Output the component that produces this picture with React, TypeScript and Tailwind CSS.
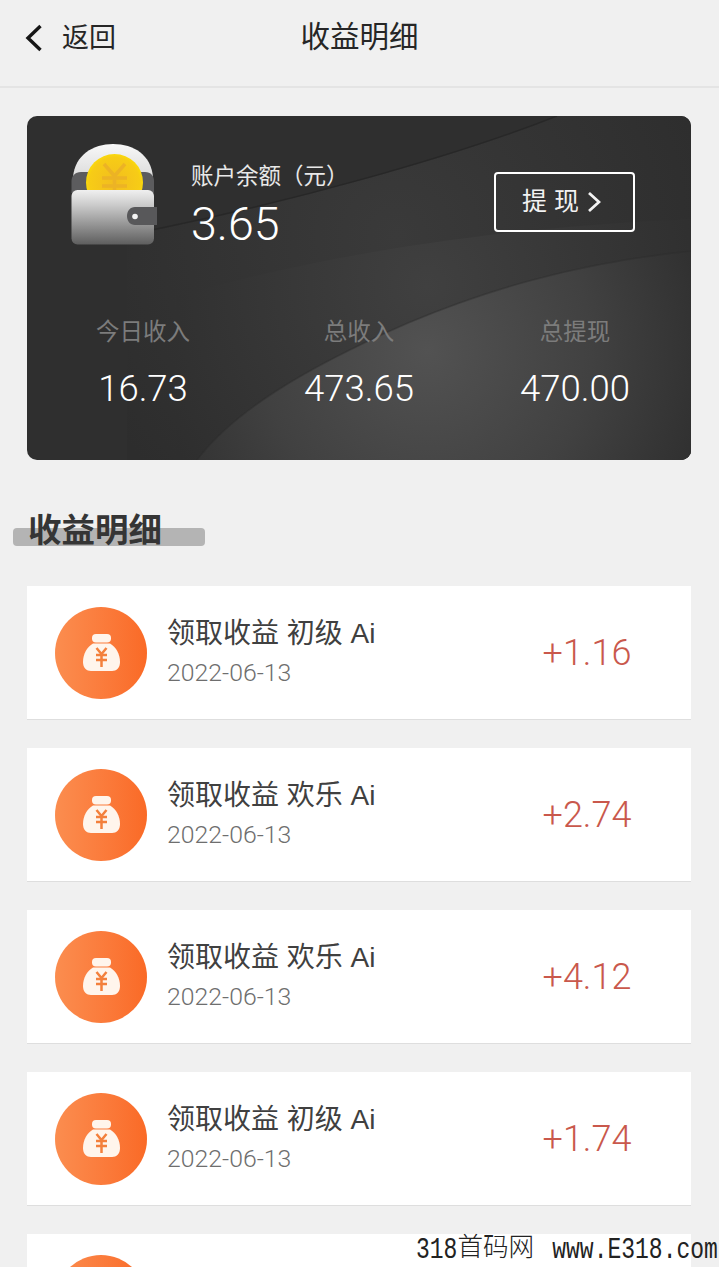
const FONT = "font-['Liberation_Sans','Noto_Sans_CJK_SC',sans-serif]";
const NUM = "font-['Roboto','Noto_Sans_CJK_SC',sans-serif] font-light";

const items = [
  { name: "领取收益 初级 Ai", value: "+1.16" },
  { name: "领取收益 欢乐 Ai", value: "+2.74" },
  { name: "领取收益 欢乐 Ai", value: "+4.12" },
  { name: "领取收益 初级 Ai", value: "+1.74" },
  { name: "", value: "" },
];

function Wallet() {
  return (
    <svg width="90" height="104" viewBox="0 0 90 104" className="shrink-0">
      <defs>
        <linearGradient id="arch" x1="0" y1="0" x2="0" y2="1">
          <stop offset="0" stopColor="#f8f8f8" />
          <stop offset="1" stopColor="#d0d0d0" />
        </linearGradient>
        <linearGradient id="body" x1="0" y1="0" x2="0" y2="1">
          <stop offset="0" stopColor="#f0f0f0" />
          <stop offset="0.25" stopColor="#cfcfcf" />
          <stop offset="1" stopColor="#5e5e5e" />
        </linearGradient>
        <radialGradient id="coin" cx="0.5" cy="0.5" r="0.55">
          <stop offset="0" stopColor="#f2bd1e" />
          <stop offset="0.8" stopColor="#f7cc16" />
          <stop offset="1" stopColor="#fde500" />
        </radialGradient>
      </defs>
      <path d="M4 36 C6 14 24 3 44 3 C65 3 82 14 84 36 L84 50 L4 50 Z" fill="url(#arch)" />
      <path d="M2.500 40 C2.500 35 6 31 12 31 L76 31 C82 31 85 35 85 40 L85 52 L2.500 52 Z" fill="#5c5c5e" />
      <circle cx="45.500" cy="41.500" r="28.500" fill="url(#coin)" />
      <g fill="none" stroke="#ecb325" strokeWidth="3.500">
        <path d="M35 23 L45.500 35 L56 23" />
        <path d="M33 37 H58 M33 45 H58 M45.500 35 V50" />
      </g>
      <rect x="2.500" y="49" width="82.500" height="54.500" rx="6" fill="url(#body)" />
      <path d="M66 66 H88 V84 H66 C61 84 58 80 58 75 C58 70 61 66 66 66 Z" fill="#58585a" />
      <circle cx="66" cy="75.500" r="2.800" fill="#f4f4f4" />
    </svg>
  );
}

function Bag() {
  return (
    <svg width="37" height="37" viewBox="0 0 37 37">
      <rect x="9" y="0" width="19" height="8.500" rx="4" fill="#fff5ec" />
      <path d="M10 9.500 H27 C33 13 37 20 37 28 C37 34 33.500 37 29 37 H8 C3.500 37 0 34 0 28 C0 20 4 13 10 9.500 Z" fill="#fff5ec" />
      <g stroke="#f3803c" strokeWidth="2.500" fill="none">
        <path d="M13.500 14 L18.500 20 L23.500 14" />
        <path d="M13 21 H24 M13 26 H24 M18.500 20 V33" />
      </g>
    </svg>
  );
}

function Stat({ label, value }: { label: string; value: string }) {
  return (
    <div className="flex w-[216px] flex-col items-center">
      <div className="text-[23.500px] leading-[30px] text-[#7c7c7c]">{label}</div>
      <div className={`${NUM} mt-[21px] text-[36.500px] leading-[42px] text-white`}>{value}</div>
    </div>
  );
}

export default function App() {
  return (
    <div className={`${FONT} relative h-[1267px] w-[719px] overflow-hidden bg-[#f0f0f0]`}>
      <header className="relative flex h-[88px] items-center justify-center border-b-2 border-[#e4e4e4] pb-[12px]">
        <div className="absolute left-[25px] top-[23px] flex items-center gap-[19px]">
          <svg width="18" height="28" viewBox="0 0 18 28" fill="none" stroke="#161616" strokeWidth="3.400">
            <path d="M15.500 2 L3 14 L15.500 26" />
          </svg>
          <span className="text-[27px] leading-[30px] text-[#262626]">返回</span>
        </div>
        <h1 className="text-[29.500px] font-normal leading-[36px] text-[#262626]">收益明细</h1>
      </header>

      <section className="relative ml-[27px] mt-[28px] h-[344px] w-[664px] overflow-hidden rounded-[10px] bg-[#2f2f2f]">
        <svg className="absolute inset-0" width="664" height="344" viewBox="0 0 664 344">
          <defs>
            <radialGradient id="top" gradientUnits="userSpaceOnUse" cx="370" cy="120" r="340">
              <stop offset="0" stopColor="#3a3a3a" />
              <stop offset="1" stopColor="#2d2d2d" />
            </radialGradient>
            <radialGradient id="mid" gradientUnits="userSpaceOnUse" cx="400" cy="170" r="300">
              <stop offset="0" stopColor="#404040" />
              <stop offset="1" stopColor="#2e2e2e" />
            </radialGradient>
            <radialGradient id="low" gradientUnits="userSpaceOnUse" cx="400" cy="235" r="300">
              <stop offset="0" stopColor="#525252" />
              <stop offset="0.55" stopColor="#414141" />
              <stop offset="1" stopColor="#2e2e2e" />
            </radialGradient>
          </defs>
          <path d="M100 120 C240 92 424 44 530 0 L664 0 L664 344 L100 344 Z" fill="url(#top)" />
          <path d="M150 180 C300 138 466 112 664 103 L664 344 L150 344 Z" fill="url(#mid)" />
          <path d="M170 344 C205 298 271 255 381 207 C450 178 540 148 664 135 L664 344 Z" fill="url(#low)" />
          <path d="M120 115 C254 88 424 42 530 0" fill="none" stroke="#232323" strokeWidth="1.500" opacity="0.6" />
          <path d="M170 344 C205 298 271 255 381 207 C450 178 540 148 664 135" fill="none" stroke="#2a2a2a" strokeWidth="1.500" opacity="0.4" />
        </svg>

        <div className="relative flex flex-col">
          <div className="flex h-[201px] items-start pl-[42px] pt-[25px]">
            <Wallet />
            <div className="ml-[32px] mt-[21px] flex flex-col">
              <div className="text-[22.500px] leading-[30px] text-[#e8e8e8]">账户余额（元）</div>
              <div className={`${NUM} mt-[6px] text-[46.500px] leading-[52px] text-white`}>3.65</div>
            </div>
            <button className="absolute left-[467px] top-[56px] flex h-[60px] w-[141px] items-center gap-[8px] rounded-[4px] border-2 border-white pl-[26px] text-[25px] text-[#f2f2f2]">
              <span>提 现</span>
              <svg width="14" height="22" viewBox="0 0 14 22" fill="none" stroke="#f2f2f2" strokeWidth="2.800">
                <path d="M2 2 L12 11 L2 20" />
              </svg>
            </button>
          </div>
          <div className="flex pl-[8px]">
            <Stat label="今日收入" value="16.73" />
            <Stat label="总收入" value="473.65" />
            <Stat label="总提现" value="470.00" />
          </div>
        </div>
      </section>

      <div className="relative mt-[49px] h-[40px] pl-[28px]">
        <div className="absolute left-[13px] top-[19px] h-[18px] w-[192px] rounded-[4px] bg-[#b4b4b4]" />
        <h2 className="relative top-[2px] text-[33.500px] font-bold leading-[40px] text-[#353535]">收益明细</h2>
      </div>

      <div className="ml-[27px] mt-[37px] flex w-[664px] flex-col gap-[28px]">
        {items.map((item, i) => (
          <div key={i} className="flex h-[134px] shrink-0 items-center border-b border-[#dedede] bg-white pl-[28px]">
            <div className="flex h-[92px] w-[92px] shrink-0 items-center justify-center rounded-full bg-gradient-to-r from-[#fb8d4f] to-[#fa6a26]">
              {item.name ? <Bag /> : null}
            </div>
            {item.name ? (
              <>
                <div className="mb-[3px] ml-[20px] flex flex-col">
                  <div className="text-[28px] leading-[36px] text-[#404040]">{item.name}</div>
                  <div className={`${NUM} mt-[7px] text-[24.800px] leading-[28px] text-[#6e6e6e]`}>2022-06-13</div>
                </div>
                <div className={`${NUM} ml-auto w-[208px] text-center text-[36px] text-[#c9584c]`}>{item.value}</div>
              </>
            ) : null}
          </div>
        ))}
      </div>

      <div className="absolute bottom-[2px] left-[416px] flex h-[30px] items-center font-['Liberation_Mono','Noto_Sans_CJK_SC',monospace] text-[23px] whitespace-nowrap text-[#222222]">
        <span className="inline-block scale-y-[1.3]">318</span>
        <span className="text-[25.600px] font-light">首码网</span>
        <span className="ml-[18px] inline-block scale-y-[1.3]">www.E318.com</span>
      </div>
    </div>
  );
}
